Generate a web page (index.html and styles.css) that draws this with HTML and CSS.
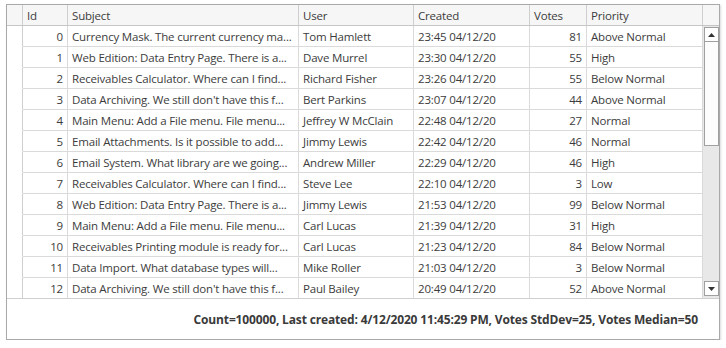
FILE: index.html
```html
<!DOCTYPE html>
<html>
<head>
<meta charset="utf-8">
<link rel="stylesheet" href="styles.css">
</head>
<body>
<div class="grid">
  <div class="head">
    <div class="hc ind"></div>
    <div class="hc">Id</div>
    <div class="hc">Subject</div>
    <div class="hc">User</div>
    <div class="hc">Created</div>
    <div class="hc">Votes</div>
    <div class="hc">Priority</div>
    <div class="hc sc"></div>
  </div>
  <div class="body">
    <div class="rows">
      <div class="row"><div class="c ind"></div><div class="c num">0</div><div class="c">Currency Mask. The current currency ma...</div><div class="c">Tom Hamlett</div><div class="c">23:45 04/12/20</div><div class="c num">81</div><div class="c">Above Normal</div></div>
      <div class="row"><div class="c ind"></div><div class="c num">1</div><div class="c">Web Edition: Data Entry Page. There is a...</div><div class="c">Dave Murrel</div><div class="c">23:30 04/12/20</div><div class="c num">55</div><div class="c">High</div></div>
      <div class="row"><div class="c ind"></div><div class="c num">2</div><div class="c">Receivables Calculator. Where can I find...</div><div class="c">Richard Fisher</div><div class="c">23:26 04/12/20</div><div class="c num">55</div><div class="c">Below Normal</div></div>
      <div class="row"><div class="c ind"></div><div class="c num">3</div><div class="c">Data Archiving. We still don't have this f...</div><div class="c">Bert Parkins</div><div class="c">23:07 04/12/20</div><div class="c num">44</div><div class="c">Above Normal</div></div>
      <div class="row"><div class="c ind"></div><div class="c num">4</div><div class="c">Main Menu: Add a File menu. File menu...</div><div class="c">Jeffrey W McClain</div><div class="c">22:48 04/12/20</div><div class="c num">27</div><div class="c">Normal</div></div>
      <div class="row"><div class="c ind"></div><div class="c num">5</div><div class="c">Email Attachments. Is it possible to add...</div><div class="c">Jimmy Lewis</div><div class="c">22:42 04/12/20</div><div class="c num">46</div><div class="c">Normal</div></div>
      <div class="row"><div class="c ind"></div><div class="c num">6</div><div class="c">Email System. What library are we going...</div><div class="c">Andrew Miller</div><div class="c">22:29 04/12/20</div><div class="c num">46</div><div class="c">High</div></div>
      <div class="row"><div class="c ind"></div><div class="c num">7</div><div class="c">Receivables Calculator. Where can I find...</div><div class="c">Steve Lee</div><div class="c">22:10 04/12/20</div><div class="c num">3</div><div class="c">Low</div></div>
      <div class="row"><div class="c ind"></div><div class="c num">8</div><div class="c">Web Edition: Data Entry Page. There is a...</div><div class="c">Jimmy Lewis</div><div class="c">21:53 04/12/20</div><div class="c num">99</div><div class="c">Below Normal</div></div>
      <div class="row"><div class="c ind"></div><div class="c num">9</div><div class="c">Main Menu: Add a File menu. File menu...</div><div class="c">Carl Lucas</div><div class="c">21:39 04/12/20</div><div class="c num">31</div><div class="c">High</div></div>
      <div class="row"><div class="c ind"></div><div class="c num">10</div><div class="c">Receivables Printing module is ready for...</div><div class="c">Carl Lucas</div><div class="c">21:23 04/12/20</div><div class="c num">84</div><div class="c">Below Normal</div></div>
      <div class="row"><div class="c ind"></div><div class="c num">11</div><div class="c">Data Import. What database types will...</div><div class="c">Mike Roller</div><div class="c">21:03 04/12/20</div><div class="c num">3</div><div class="c">Below Normal</div></div>
      <div class="row last"><div class="c ind"></div><div class="c num">12</div><div class="c">Data Archiving. We still don't have this f...</div><div class="c">Paul Bailey</div><div class="c">20:49 04/12/20</div><div class="c num">52</div><div class="c">Above Normal</div></div>
    </div>
    <div class="scroll">
      <div class="sbtn"><svg width="7" height="4" viewBox="0 0 7 4"><path d="M0 4 L3.5 0 L7 4 Z" fill="#333"/></svg></div>
      <div class="thumb"></div>
      <div class="track"></div>
      <div class="sbtn"><svg width="7" height="4" viewBox="0 0 7 4"><path d="M0 0 L3.5 4 L7 0 Z" fill="#333"/></svg></div>
    </div>
  </div>
  <div class="foot">Count=100000, Last created: 4/12/2020 11:45:29 PM, Votes StdDev=25, Votes Median=50</div>
</div>
</body>
</html>
```
FILE: styles.css
```css
html, body {
  margin: 0;
  padding: 0;
  background: #ffffff;
}
body {
  padding: 4px 0 0 6px;
  font-family: "Segoe UI", "Open Sans", "Noto Sans", sans-serif;
  font-size: 11.5px;
  letter-spacing: -0.18px;
  color: #3c3c3c;
}
.grid {
  width: 712px;
  border: 1px solid #a9a9a9;
  box-shadow: 1px 1px 2px rgba(0,0,0,0.15);
  background: #fff;
}
.head {
  display: grid;
  grid-template-columns: 16px 45px 231px 115px 116px 57px 116px 16px;
  background: #f6f6f6;
  border-bottom: 1px solid #c6c6c6;
  box-sizing: border-box;
  height: 21px;
}
.hc {
  box-sizing: border-box;
  border-right: 1px solid #cfcfcf;
  padding: 2px 5px 0 4px;
  line-height: 18px;
  white-space: nowrap;
  overflow: hidden;
}
.hc.sc {
  border-right: none;
}
.body {
  display: flex;
}
.rows {
  width: 696px;
}
.row {
  display: grid;
  grid-template-columns: 16px 45px 231px 115px 116px 57px 116px;
  height: 21px;
}
.c {
  box-sizing: border-box;
  border-right: 1px solid #dadada;
  border-bottom: 1px solid #dadada;
  padding: 2px 4px 0 4px;
  line-height: 18px;
  white-space: nowrap;
  overflow: hidden;
  text-overflow: ellipsis;
}
.c.ind {
  border-bottom-color: transparent;
  border-right-color: #cfcfcf;
}
.c.num {
  text-align: right;
}
.row.last .c {
  border-bottom-color: #cfcfcf;
}
.scroll {
  width: 16px;
  display: flex;
  flex-direction: column;
  border-bottom: 1px solid #cfcfcf;
  box-sizing: border-box;
  height: 273px;
  background: #e8e8e8;
}
.sbtn {
  width: 15px;
  height: 15px;
  box-sizing: border-box;
  border: 1px solid #a0a0a0;
  background: #fff;
  display: flex;
  align-items: center;
  justify-content: center;
  margin: 1px 0 0 1px;
}
.scroll .sbtn:last-child {
  margin: 0 0 2px 1px;
}
.thumb {
  width: 15px;
  height: 104px;
  box-sizing: border-box;
  border: 1px solid #a0a0a0;
  border-top: none;
  background: #fdfdfd;
  margin-left: 1px;
}
.track {
  flex: 1;
}
.foot {
  height: 40px;
  line-height: 42px;
  text-align: right;
  padding-right: 21px;
  font-size: 12px;
  letter-spacing: -0.15px;
  font-weight: bold;
  color: #3a3a3a;
  white-space: nowrap;
}
```
